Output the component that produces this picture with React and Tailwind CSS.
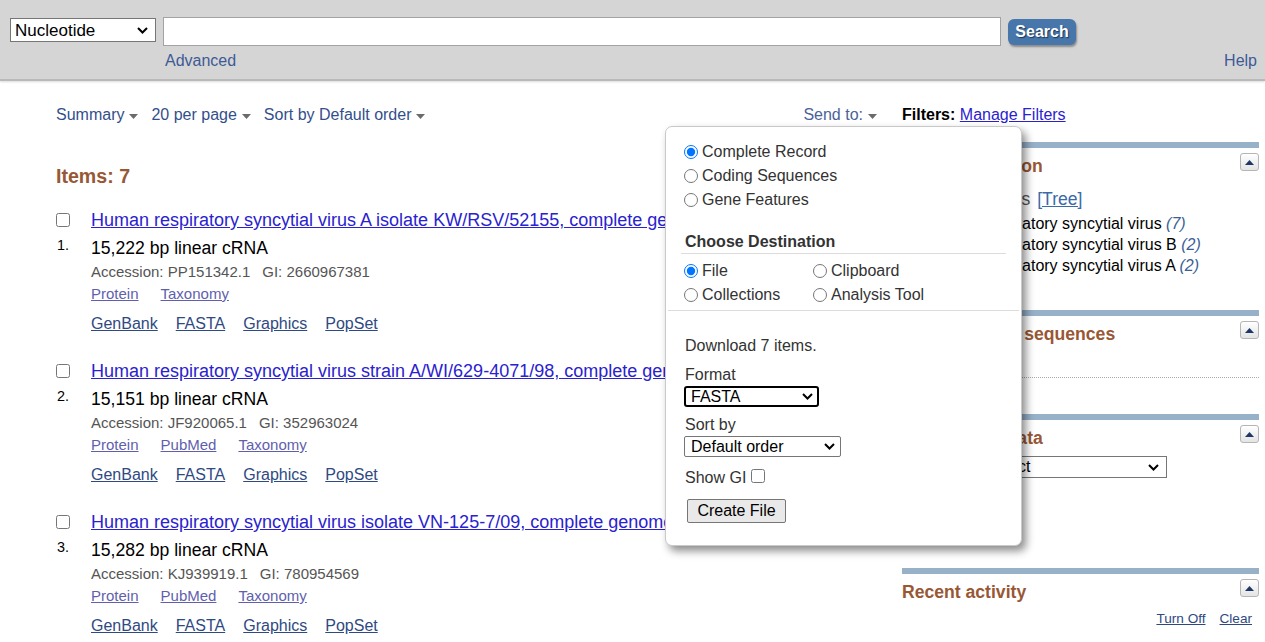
import { useState } from "react";

const Chevron = ({ className = "" }) => (
  <svg width="11" height="7" viewBox="0 0 11 7" className={className}>
    <path d="M1 1 L5.5 5.5 L10 1" fill="none" stroke="#000" strokeWidth="2" />
  </svg>
);

const Caret = () => (
  <svg width="9" height="5" viewBox="0 0 9 5" className="ml-[5px] mt-[2px]">
    <path d="M0 0 L9 0 L4.5 5 Z" fill="#6b6b6b" />
  </svg>
);

const CollapseBtn = ({ className = "" }) => (
  <div
    className={`w-[19px] h-[18px] rounded-[3px] border border-[#b5b5b5] bg-gradient-to-b from-white to-[#e4e4e4] flex items-center justify-center ${className}`}
  >
    <svg width="9" height="5" viewBox="0 0 9 5">
      <path d="M0 5 L4.5 0 L9 5 Z" fill="#1d3866" />
    </svg>
  </div>
);

const results = [
  {
    title: "Human respiratory syncytial virus A isolate KW/RSV/52155, complete genome",
    desc: "15,222 bp linear cRNA",
    acc: "PP151342.1",
    gi: "2660967381",
    links: ["Protein", "Taxonomy"],
  },
  {
    title: "Human respiratory syncytial virus strain A/WI/629-4071/98, complete genome",
    desc: "15,151 bp linear cRNA",
    acc: "JF920065.1",
    gi: "352963024",
    links: ["Protein", "PubMed", "Taxonomy"],
  },
  {
    title: "Human respiratory syncytial virus isolate VN-125-7/09, complete genome",
    desc: "15,282 bp linear cRNA",
    acc: "KJ939919.1",
    gi: "780954569",
    links: ["Protein", "PubMed", "Taxonomy"],
  },
];

const Radio = ({ name, label, checked }) => (
  <label className="flex items-center h-[24px]">
    <input type="radio" name={name} defaultChecked={checked} className="w-[14px] h-[14px] m-0" />
    <span className="ml-[4px]">{label}</span>
  </label>
);

const SectionHead = ({ title }) => (
  <div className="flex justify-between items-start">
    <div className="mt-[8px] leading-[20px] text-[17.6px] font-bold text-[#985735]">{title}</div>
    <CollapseBtn className="mt-[5px]" />
  </div>
);

export default function App() {
  const [sel] = useState(0);

  return (
    <div className="relative min-h-screen bg-white text-[16px] font-['Liberation_Sans',Arial,sans-serif]">
      {/* Search bar */}
      <div className="h-[81px] bg-[#d5d5d5] border-b-[2px] border-[#b9b9b9] shadow-[0_1px_2px_rgba(0,0,0,0.15)] pl-[10px] pr-[8px] pt-[17px]">
        <div className="flex items-start">
          <div className="mt-[1px] w-[146px] h-[24px] border border-[#767676] bg-white flex items-center justify-between pl-[4px] pr-[7px] text-[17px] text-black leading-none">
            <span>Nucleotide</span>
            <Chevron />
          </div>
          <div className="ml-[7px] w-[838px] h-[29px] border border-[#a3a3a3] bg-white" />
          <button className="ml-[7px] mt-[2px] w-[68px] h-[26px] rounded-[6px] bg-[#4776ab] text-white font-bold text-[16px] leading-none shadow-[1px_2px_2px_rgba(0,0,0,0.35)] [text-shadow:1px_1px_1px_#1d3557]">
            Search
          </button>
        </div>
        <div className="flex justify-between mt-[6px] text-[16px] leading-[18px] text-[#3d5a96]">
          <span className="ml-[155px]">Advanced</span>
          <span>Help</span>
        </div>
      </div>

      {/* Main */}
      <div className="flex pl-[56px] pt-[25px]">
        {/* Left column */}
        <div className="w-[821px]">
          <div className="flex justify-between items-center h-[18px] leading-[18px] text-[#324f8c]">
            <div className="flex items-center">
              <span>Summary</span>
              <Caret />
              <span className="ml-[13px]">20 per page</span>
              <Caret />
              <span className="ml-[13px]">Sort by Default order</span>
              <Caret />
            </div>
            <div className="flex items-center text-[#4a6399]">
              <span>Send to:</span>
              <Caret />
            </div>
          </div>

          <div className="mt-[41px] text-[19.6px] leading-[22px] font-bold text-[#985735]">Items: 7</div>

          <div className="mt-[23px]">
            {results.map((r, i) => (
              <div key={i} className="flex mb-[28px]">
                <div className="w-[35px] flex flex-col">
                  <input type="checkbox" className="w-[14px] h-[14px] m-0 mt-[3px]" />
                  <span className="mt-[10px] ml-[1px] text-[14.4px] leading-[16px] text-black">{i + 1}.</span>
                </div>
                <div className="flex-1">
                  <div className="h-[20px] leading-[20px] text-[18px] text-[#2a22cf] underline whitespace-nowrap">{r.title}</div>
                  <div className="mt-[8px] h-[20px] leading-[20px] text-[17.6px] text-black">{r.desc}</div>
                  <div className="mt-[6px] h-[16px] leading-[16px] text-[15px] text-[#555]">
                    Accession: {r.acc}
                    <span className="ml-[12px]">GI: {r.gi}</span>
                  </div>
                  <div className="mt-[6px] h-[16px] leading-[16px] text-[15px] text-[#5f5fae] flex gap-[22px]">
                    {r.links.map((l) => (
                      <span key={l} className="underline">{l}</span>
                    ))}
                  </div>
                  <div className="mt-[13px] h-[18px] leading-[18px] text-[16px] text-[#2f4a82] flex gap-[18px]">
                    {["GenBank", "FASTA", "Graphics", "PopSet"].map((l) => (
                      <span key={l} className="underline">{l}</span>
                    ))}
                  </div>
                </div>
              </div>
            ))}
          </div>
        </div>

        {/* Right column */}
        <div className="ml-[25px] w-[357px]">
          <div className="h-[18px] leading-[18px]">
            <span className="font-bold text-black">Filters:</span>{" "}
            <span className="underline text-[#2a22cf]">Manage Filters</span>
          </div>

          <div className="mt-[18px] h-[168px]">
            <div className="h-[6px] bg-[#97b1c9]" />
            <SectionHead title="Results by taxon" />
            <div className="mt-[13px] ml-[10px] h-[20px] leading-[20px] text-[17.6px] text-[#555]">
              Top Organisms <span className="ml-[2px] underline text-[#3a6aa8]">[Tree]</span>
            </div>
            <div className="mt-[4px] pl-[24px] text-black">
              {[
                ["Human respiratory syncytial virus", "(7)"],
                ["Human respiratory syncytial virus B", "(2)"],
                ["Human respiratory syncytial virus A", "(2)"],
              ].map(([n, c]) => (
                <div key={n} className="h-[21px] leading-[21px]">
                  {n} <i className="text-[#3a5f95]">{c}</i>
                </div>
              ))}
            </div>
          </div>

          <div className="h-[104px]">
            <div className="h-[6px] bg-[#97b1c9]" />
            <SectionHead title="Analyze these sequences" />
            <div className="mt-[7px] pl-[10px] pb-[8px] leading-[18px] border-b border-dotted border-[#aaa] text-[#2f4a82] underline">
              Run BLAST
            </div>
          </div>

          <div className="h-[154px]">
            <div className="h-[6px] bg-[#97b1c9]" />
            <SectionHead title="Find related data" />
            <div className="mt-[7px] flex items-center">
              <span className="text-[#333]">Database:</span>
              <div className="ml-[6px] w-[186px] h-[22px] border border-[#767676] bg-white flex items-center justify-between pl-[4px] pr-[7px] text-[16px] text-black">
                <span>Select</span>
                <Chevron />
              </div>
            </div>
            <button className="mt-[12px] px-[8px] h-[24px] border border-[#767676] rounded-[2px] bg-[#efefef] text-[16px]">Find items</button>
          </div>

          <div>
            <div className="h-[6px] bg-[#97b1c9]" />
            <SectionHead title="Recent activity" />
            <div className="mt-[9px] flex justify-end gap-[14px] pr-[7px] text-[13.6px] leading-[16px] text-[#2d4a7f]">
              <span className="underline">Turn Off</span>
              <span className="underline">Clear</span>
            </div>
          </div>
        </div>
      </div>

      {/* Send to popup */}
      <div className="absolute left-[665px] top-[126px] w-[357px] h-[420px] bg-white border border-[#c9c9c9] rounded-[7px] shadow-[4px_5px_9px_rgba(0,0,0,0.45)] text-[#333]">
        <div className="pl-[18px] pt-[13px]">
          <Radio name="fmt" label="Complete Record" checked={sel === 0} />
          <Radio name="fmt" label="Coding Sequences" />
          <Radio name="fmt" label="Gene Features" />
        </div>
        <div className="ml-[15px] w-[325px] mt-[21px] pl-[4px] pb-[2px] leading-[18px] font-bold border-b border-[#dcdcdc]">
          Choose Destination
        </div>
        <div className="pl-[18px] mt-[5px] grid grid-cols-[129px_1fr]">
          <Radio name="dest" label="File" checked />
          <Radio name="dest" label="Clipboard" />
          <Radio name="dest" label="Collections" />
          <Radio name="dest" label="Analysis Tool" />
        </div>
        <div className="mx-[2px] mt-[3px] h-px bg-[#dcdcdc]" />
        <div className="pl-[19px]">
          <div className="mt-[26px] leading-[18px]">Download 7 items.</div>
          <div className="mt-[11px] leading-[18px]">Format</div>
          <div className="mt-[2px] -ml-[1px] w-[135px] h-[21px] border-2 border-black rounded-[3px] flex items-center justify-between pl-[5px] pr-[4px] text-black">
            <span>FASTA</span>
            <Chevron />
          </div>
          <div className="mt-[9px] leading-[18px]">Sort by</div>
          <div className="mt-[2px] -ml-[1px] w-[157px] h-[21px] border border-[#767676] rounded-[2px] flex items-center justify-between pl-[6px] pr-[5px] text-black">
            <span>Default order</span>
            <Chevron />
          </div>
          <div className="mt-[12px] flex items-center h-[18px]">
            <span>Show GI</span>
            <input type="checkbox" className="ml-[5px] w-[14px] h-[14px] m-0 -mt-[4px]" />
          </div>
          <button className="mt-[12px] ml-[2px] w-[99px] h-[24px] border border-[#767676] rounded-[2px] bg-[#e9e9e9] text-black text-[16px] leading-none">
            Create File
          </button>
        </div>
      </div>
    </div>
  );
}
